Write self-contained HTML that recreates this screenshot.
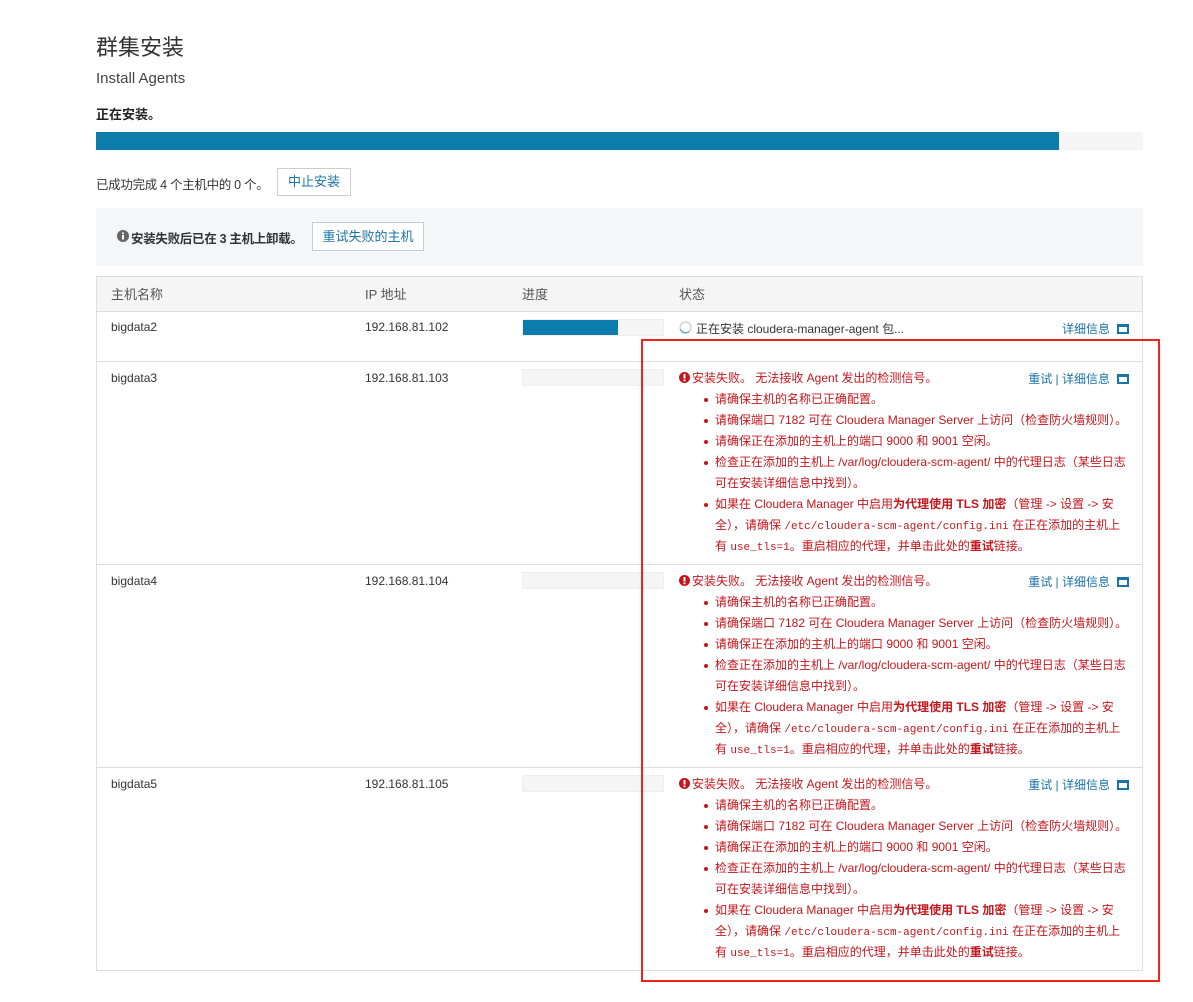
<!DOCTYPE html>
<html><head><meta charset="utf-8"><style>
*{margin:0;padding:0;box-sizing:border-box}
body{width:1193px;height:1002px;background:#fff;font-family:"Liberation Sans","Noto Sans CJK SC",sans-serif;color:#333;position:relative;overflow:hidden}
.a{position:absolute;white-space:nowrap}
.btn{position:absolute;border:1px solid #ccc;background:#fff;color:#1a74a8;font-size:13px;text-align:center}
.row{position:absolute;left:96px;width:1047px;border-top:1px solid #ddd;font-size:12px}
.bar{position:absolute;left:426px;top:7px;width:142px;height:17px;background:#f5f5f5;border:1px solid #eee}
.st{position:absolute;left:583px;top:9px;font-size:12px;color:#c4161c}
.st .l{height:21px;line-height:14px;white-space:nowrap}
.st ul{list-style:none;margin-left:36px}
.st li{position:relative;height:21px;line-height:14px;white-space:nowrap}
.st li:before{content:"";position:absolute;left:-11px;top:6px;width:4px;height:4px;border-radius:50%;background:#c4161c}
.st li.w{height:auto}
.st li.w div{height:21px}
.mono{font-family:"Liberation Mono",monospace;font-size:11px}
b{font-weight:bold}
.lk{position:absolute;right:14px;top:8px;color:#1a74a8;font-size:12px;white-space:nowrap}
.win{display:inline-block;width:12px;height:10px;border:2px solid #1a74a8;border-top-width:3px;vertical-align:-1px;margin-left:7px}
</style></head><body>
<div class="a" style="left:96px;top:30px;font-size:22px;color:#333">群集安装</div>
<div class="a" style="left:96px;top:70px;font-size:15px;color:#444">Install Agents</div>
<div class="a" style="left:96px;top:104px;font-size:13px;font-weight:bold;color:#222">正在安装。</div>
<div class="a" style="left:96px;top:132px;width:1047px;height:18px;background:#f5f5f5"></div>
<div class="a" style="left:96px;top:132px;width:963px;height:18px;background:#0b7cab"></div>
<div class="a" style="left:96px;top:174px;font-size:12.5px;letter-spacing:-0.3px;color:#333">已成功完成 4 个主机中的 0 个。</div>
<div class="btn" style="left:277px;top:168px;width:74px;height:28px;line-height:26px">中止安装</div>
<div class="a" style="left:96px;top:208px;width:1047px;height:58px;background:#f3f7fa"></div>
<svg class="a" style="left:117px;top:230px" width="12" height="12" viewBox="0 0 12 12"><circle cx="6" cy="6" r="6" fill="#666"/><rect x="5" y="5" width="2" height="4.5" fill="#fff"/><rect x="5" y="2.5" width="2" height="1.6" fill="#fff"/></svg>
<div class="a" style="left:131px;top:228px;font-size:12.5px;letter-spacing:-0.3px;font-weight:bold;color:#333">安装失败后已在 3 主机上卸载。</div>
<div class="btn" style="left:312px;top:222px;width:112px;height:29px;line-height:27px">重试失败的主机</div>

<div class="a" style="left:96px;top:276px;width:1047px;height:695px;border:1px solid #ddd"></div>
<div class="a" style="left:97px;top:277px;width:1045px;height:35px;background:#f5f5f5;border-bottom:1px solid #ddd"></div>
<div class="a" style="left:111px;top:284px;font-size:13px;color:#555">主机名称</div>
<div class="a" style="left:365px;top:284px;font-size:13px;color:#555">IP 地址</div>
<div class="a" style="left:522px;top:284px;font-size:13px;color:#555">进度</div>
<div class="a" style="left:679px;top:284px;font-size:13px;color:#555">状态</div>

<div class="row" style="top:312px;height:49px;border-top:none">
<div class="a" style="left:15px;top:8px">bigdata2</div>
<div class="a" style="left:269px;top:8px">192.168.81.102</div>
<div class="bar"><div style="width:95px;height:15px;background:#0b7cab"></div></div>
<svg class="a" style="left:583px;top:9px" width="13" height="13" viewBox="0 0 13 13"><circle cx="6.5" cy="6.5" r="5.5" fill="none" stroke="#ccc" stroke-width="1.2"/><path d="M1.5 8.5A5.5 5.5 0 0 0 10 10.5" fill="none" stroke="#5a9fd0" stroke-width="1.3"/></svg>
<div class="a" style="left:600px;top:8px">正在安装 cloudera-manager-agent 包...</div>
<div class="lk" style="top:8px">详细信息<span class="win"></span></div>
</div>

<div class="row" style="top:361px;height:203px" id="r3"></div>
<div class="row" style="top:564px;height:203px" id="r4"></div>
<div class="row" style="top:767px;height:203px" id="r5"></div>

<div class="a" style="left:641px;top:339px;width:519px;height:643px;border:2px solid #f0231c"></div>
<script>
var ips={r3:['bigdata3','192.168.81.103'],r4:['bigdata4','192.168.81.104'],r5:['bigdata5','192.168.81.105']};
for(var k in ips){document.getElementById(k).innerHTML=
'<div class="a" style="left:15px;top:9px">'+ips[k][0]+'</div>'+
'<div class="a" style="left:269px;top:9px">'+ips[k][1]+'</div>'+
'<div class="bar"></div>'+
'<div class="st"><div class="l"><svg width="11" height="11" viewBox="0 0 11 11" style="vertical-align:-1px;margin-right:2px"><circle cx="5.5" cy="5.5" r="5.5" fill="#c4161c"/><rect x="4.5" y="2" width="2" height="4.5" fill="#fff"/><rect x="4.5" y="7.5" width="2" height="1.7" fill="#fff"/></svg>安装失败。 无法接收 Agent 发出的检测信号。</div><ul>'+
'<li>请确保主机的名称已正确配置。</li>'+
'<li>请确保端口 7182 可在 Cloudera Manager Server 上访问（检查防火墙规则）。</li>'+
'<li>请确保正在添加的主机上的端口 9000 和 9001 空闲。</li>'+
'<li class="w"><div>检查正在添加的主机上 /var/log/cloudera-scm-agent/ 中的代理日志（某些日志</div><div>可在安装详细信息中找到）。</div></li>'+
'<li class="w"><div>如果在 Cloudera Manager 中启用<b>为代理使用 TLS 加密</b>（管理 -&gt; 设置 -&gt; 安</div><div>全），请确保 <span class="mono">/etc/cloudera-scm-agent/config.ini</span> 在正在添加的主机上</div><div>有 <span class="mono">use_tls=1</span>。重启相应的代理，并单击此处的<b>重试</b>链接。</div></li>'+
'</ul></div>'+
'<div class="lk">重试 | 详细信息<span class="win"></span></div>';}
</script>
</body></html>
